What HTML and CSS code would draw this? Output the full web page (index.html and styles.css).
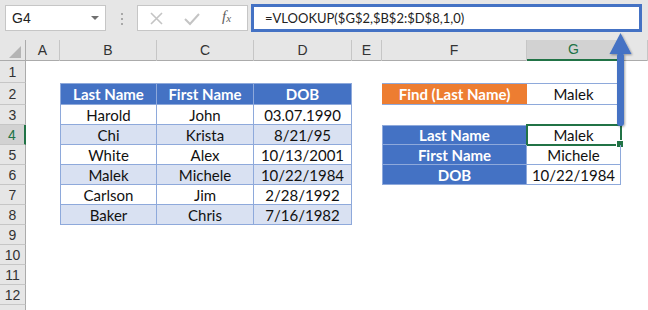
FILE: index.html
```html
<!DOCTYPE html>
<html lang="en">
<head>
    <meta charset="UTF-8">
    <title>VLOOKUP - Find Last Name</title>
    <link rel="stylesheet" href="styles.css">
</head>
<body>
    <div class="toolbar">
        <div class="namebox">G4<span class="drop"></span></div>
        <div class="dots"><i></i><i></i><i></i></div>
        <div class="fxbox">
            <svg class="ico" width="110" height="24" viewBox="0 0 110 24">
                <path d="M13 7 L24 18 M24 7 L13 18" stroke="#c4c4c4" stroke-width="1.6" fill="none"/>
                <path d="M47 13 L52 18 L61 8" stroke="#c4c4c4" stroke-width="2" fill="none"/>
            </svg>
            <span class="fx">f<sub>x</sub></span>
        </div>
        <div class="formula">=VLOOKUP($G$2,$B$2:$D$8,1,0)</div>
    </div>

    <div class="sheet">
        <div class="row head">
            <div class="corner"></div>
            <div>A</div><div>B</div><div>C</div><div>D</div><div>E</div><div>F</div><div class="sel-col">G</div><div></div>
        </div>
        <div class="row r1">
            <div class="rh">1</div>
            <div></div><div></div><div></div><div></div><div></div><div></div><div></div><div></div>
        </div>
        <div class="row r2">
            <div class="rh">2</div>
            <div></div>
            <div class="t th first top">Last Name</div><div class="t th top">First Name</div><div class="t th top">DOB</div>
            <div></div>
            <div class="find">Find (Last Name)</div><div class="t val top">Malek</div>
            <div></div>
        </div>
        <div class="row">
            <div class="rh">3</div>
            <div></div>
            <div class="t first">Harold</div><div class="t">John</div><div class="t">03.07.1990</div>
            <div></div><div></div><div></div><div></div>
        </div>
        <div class="row">
            <div class="rh sel-row">4</div>
            <div></div>
            <div class="t alt first">Chi</div><div class="t alt">Krista</div><div class="t alt">8/21/95</div>
            <div></div>
            <div class="t lbl first top">Last Name</div><div class="t val top active">Malek</div>
            <div></div>
        </div>
        <div class="row">
            <div class="rh">5</div>
            <div></div>
            <div class="t first">White</div><div class="t">Alex</div><div class="t">10/13/2001</div>
            <div></div>
            <div class="t lbl first">First Name</div><div class="t val">Michele</div>
            <div></div>
        </div>
        <div class="row">
            <div class="rh">6</div>
            <div></div>
            <div class="t alt first">Malek</div><div class="t alt">Michele</div><div class="t alt">10/22/1984</div>
            <div></div>
            <div class="t lbl first">DOB</div><div class="t val">10/22/1984</div>
            <div></div>
        </div>
        <div class="row">
            <div class="rh">7</div>
            <div></div>
            <div class="t first">Carlson</div><div class="t">Jim</div><div class="t">2/28/1992</div>
            <div></div><div></div><div></div><div></div>
        </div>
        <div class="row">
            <div class="rh">8</div>
            <div></div>
            <div class="t alt first">Baker</div><div class="t alt">Chris</div><div class="t alt">7/16/1982</div>
            <div></div><div></div><div></div><div></div>
        </div>
        <div class="row"><div class="rh">9</div></div>
        <div class="row"><div class="rh">10</div></div>
        <div class="row"><div class="rh">11</div></div>
        <div class="row"><div class="rh">12</div></div>
        <div class="row"><div class="rh"></div></div>
    </div>

    <!-- arrow pointing at the formula bar -->
    <svg class="arrow" width="40" height="110" viewBox="600 25 40 110">
        <defs>
            <filter id="sh" x="-50%" y="-20%" width="200%" height="140%">
                <feDropShadow dx="1" dy="1" stdDeviation="1.2" flood-color="#000" flood-opacity="0.35"/>
            </filter>
        </defs>
        <g filter="url(#sh)" fill="#4472c4">
            <polygon points="620.5,33 631.5,54 609.5,54"/>
            <rect x="617" y="53" width="7" height="73" rx="3"/>
        </g>
    </svg>
</body>
</html>
```

FILE: styles.css
```css
body {
    margin: 0;
    font-family: "Lato", "Liberation Sans", sans-serif;
    background: white;
    overflow: hidden;
}
.toolbar {
    height: 40px;
    background: #e6e6e6;
    display: flex;
    align-items: flex-start;
    padding: 5px 0 0 5px;
    box-sizing: border-box;
}
.namebox {
    width: 101px;
    height: 26px;
    box-sizing: border-box;
    background: white;
    border: 1px solid #c6c6c6;
    font-family: "Liberation Sans", sans-serif;
    font-size: 14px;
    color: #222;
    padding-left: 6px;
    line-height: 24px;
    display: flex;
    justify-content: space-between;
}
.drop {
    width: 0;
    height: 0;
    border-left: 4px solid transparent;
    border-right: 4px solid transparent;
    border-top: 4px solid #707070;
    margin: 10px 6px 0 0;
}
.dots {
    width: 31px;
    display: flex;
    flex-direction: column;
    align-items: center;
    gap: 3px;
    padding-top: 8px;
}
.dots i {
    width: 2px;
    height: 2px;
    background: #a8a8a8;
}
.fxbox {
    width: 111px;
    height: 26px;
    box-sizing: border-box;
    background: white;
    border: 1px solid #c6c6c6;
    position: relative;
}
.ico {
    display: block;
}
.fx {
    position: absolute;
    left: 84px;
    top: 2px;
    font-family: "Liberation Serif", serif;
    font-style: italic;
    font-size: 15px;
    color: #606060;
}
.fx sub {
    font-size: 11px;
    vertical-align: -1px;
}
.formula {
    margin-left: 3px;
    margin-top: -1px;
    width: 391px;
    height: 28px;
    box-sizing: border-box;
    background: white;
    border: 3px solid #4472c4;
    font-family: "Lato", sans-serif;
    font-size: 13px;
    color: #222;
    padding-left: 11px;
    line-height: 22px;
}

.sheet {
    font-size: 15px;
}
.row {
    display: grid;
    grid-template-columns: 26px 34px 97px 97px 98px 30px 145px 94px 1fr;
    height: 20px;
}
.row.head {
    height: 21px;
    background: #e6e6e6;
    border-bottom: 1px solid #ababab;
    box-sizing: border-box;
}
.row.r1, .row.r2 {
    height: 22px;
}
.head div {
    border-right: 1px solid #c6c6c6;
    text-align: center;
    font-family: "Liberation Sans", sans-serif;
    font-size: 14px;
    line-height: 20px;
    color: #333;
}
.head .corner {
    border-right: 1px solid #ababab;
    position: relative;
}
.corner::after {
    content: "";
    position: absolute;
    right: 4px;
    bottom: 3px;
    border-left: 12px solid transparent;
    border-bottom: 12px solid #b4b4b4;
}
.head .sel-col {
    background: #d2d2d2;
    border-bottom: 2px solid #217346;
    color: #217346;
    line-height: 19px;
}
.rh {
    background: #e6e6e6;
    border-right: 1px solid #ababab;
    border-bottom: 1px solid #c6c6c6;
    font-family: "Liberation Sans", sans-serif;
    font-size: 14px;
    color: #333;
    text-align: center;
    display: flex;
    align-items: center;
    justify-content: center;
}
.rh.sel-row {
    background: #d2d2d2;
    border-right: 2px solid #217346;
    color: #217346;
}

.t {
    border-right: 1px solid #8ea9db;
    border-bottom: 1px solid #8ea9db;
    display: flex;
    align-items: center;
    justify-content: center;
    color: #111;
    position: relative;
}
.t.first {
    border-left: 1px solid #8ea9db;
}
.t.top {
    border-top: 1px solid #8ea9db;
}
.t.alt {
    background: #d9e1f2;
}
.th, .lbl {
    background: #4472c4;
    color: white;
    font-weight: bold;
}
.find {
    background: #ed7d31;
    color: white;
    font-weight: bold;
    display: flex;
    align-items: center;
    justify-content: center;
    border-top: 1px solid #8ea9db;
    border-bottom: 1px solid #8ea9db;
}
.active {
    outline: 2px solid #217346;
    outline-offset: -1px;
}
.active::after {
    content: "";
    position: absolute;
    right: -4px;
    bottom: -4px;
    width: 6px;
    height: 6px;
    background: #217346;
    border: 1px solid white;
}
.arrow {
    position: absolute;
    left: 600px;
    top: 25px;
}
```
